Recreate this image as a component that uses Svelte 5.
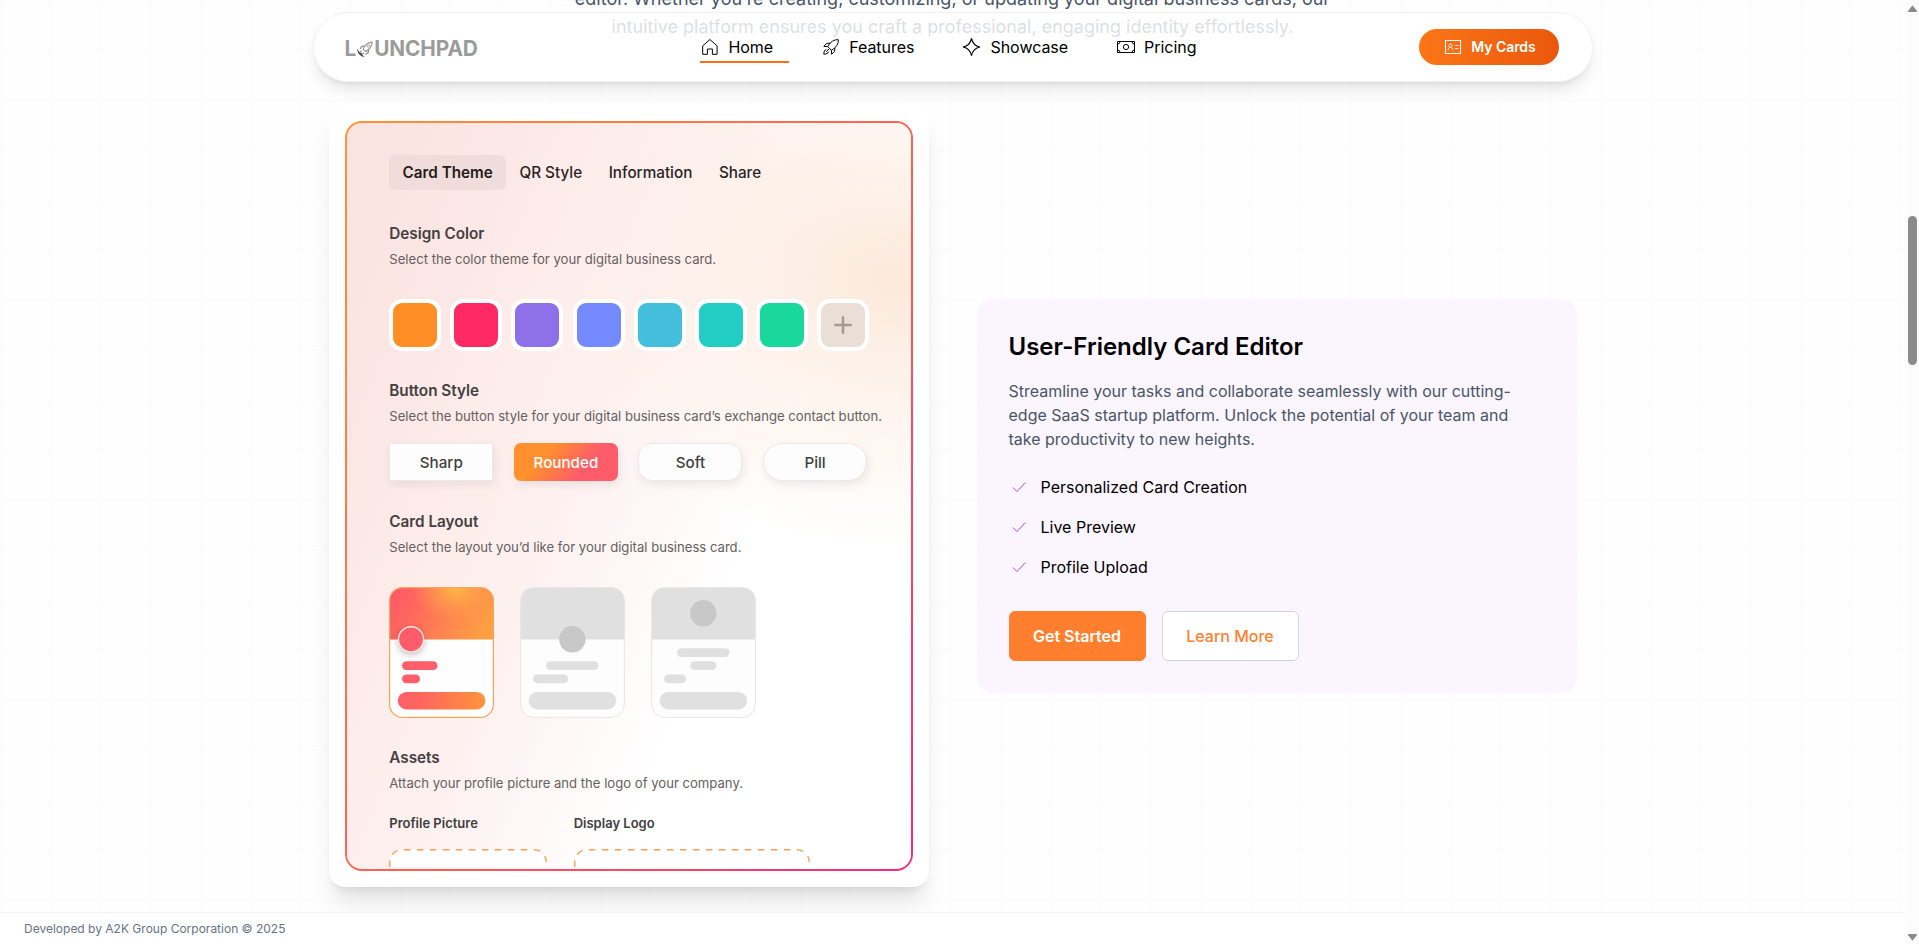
<script>
  const swatches = ['#ff8e27', '#ff2a64', '#8e70e8', '#758aff', '#44bfdb', '#22cec3', '#1ad89c'];
  const features = ['Personalized Card Creation', 'Live Preview', 'Profile Upload'];
  const tabs = ['Card Theme', 'QR Style', 'Information', 'Share'];
  const buttonStyles = [
    { label: 'Sharp', kind: 'sharp' },
    { label: 'Rounded', kind: 'rounded' },
    { label: 'Soft', kind: 'soft' },
    { label: 'Pill', kind: 'pill' }
  ];
</script>

<div class="page">
  <div class="view">
    <main>
      <p class="intro">
        editor. Whether you’re creating, customizing, or updating your digital business cards, our<br />
        intuitive platform ensures you craft a professional, engaging identity effortlessly.
      </p>

      <section class="showcase">
        <div class="frame">
          <div class="editor">
            <div class="tabs">
              {#each tabs as tab, i}
                <span class="tab" class:active={i === 0}>{tab}</span>
              {/each}
            </div>

            <h3 class="first">Design Color</h3>
            <p class="sub">Select the color theme for your digital business card.</p>
            <div class="swatches">
              {#each swatches as color}
                <span class="swatch" style="background-color: {color}"></span>
              {/each}
              <span class="swatch add">
                <svg width="18" height="18" viewBox="0 0 18 18"><path d="M9 1.3v15.4M1.3 9h15.4" /></svg>
              </span>
            </div>

            <h3>Button Style</h3>
            <p class="sub">Select the button style for your digital business card’s exchange contact button.</p>
            <div class="styles">
              {#each buttonStyles as b}
                <span class="style {b.kind}">{b.label}</span>
              {/each}
            </div>

            <h3>Card Layout</h3>
            <p class="sub">Select the layout you’d like for your digital business card.</p>
            <div class="layouts">
              <svg width="105" height="131" viewBox="0 0 105 131">
                <defs>
                  <linearGradient id="warm" x1="0" y1="0" x2="1" y2="0">
                    <stop offset="0" stop-color="#ff5e69" />
                    <stop offset=".25" stop-color="#ff6560" />
                    <stop offset="1" stop-color="#ff943c" />
                  </linearGradient>
                  <linearGradient id="head" x1="0" y1="0.2" x2="1" y2="0.5">
                    <stop offset="0" stop-color="#ff5a67" />
                    <stop offset=".25" stop-color="#ff6660" />
                    <stop offset="1" stop-color="#ff9f42" />
                  </linearGradient>
                  <radialGradient id="sun" gradientUnits="userSpaceOnUse" cx="66" cy="0" r="44" gradientTransform="matrix(1 0 0 .8 0 0)">
                    <stop offset="0" stop-color="#ffbc46" />
                    <stop offset="1" stop-color="#ffa042" stop-opacity="0" />
                  </radialGradient>
                  <clipPath id="round"><rect x=".5" y=".5" width="104" height="130" rx="13" /></clipPath>
                </defs>
                <g clip-path="url(#round)">
                  <rect width="105" height="131" fill="#fefefe" />
                  <rect width="105" height="52.5" fill="url(#head)" />
                  <rect width="105" height="52.5" fill="url(#sun)" />
                </g>
                <rect x=".6" y=".6" width="103.8" height="129.8" rx="13" fill="none" stroke="#f6a45c" stroke-width="1.2" />
                <circle class="lift" cx="22" cy="52.3" r="12.6" fill="#ff5c69" stroke="#f7e6e4" stroke-width="1.4" />
                <rect x="13" y="74.3" width="35.5" height="8.8" rx="4.4" fill="#ff5f6b" />
                <rect x="13" y="87.4" width="18" height="8.8" rx="4.4" fill="#ff5f6b" />
                <rect x="8.8" y="105" width="87.6" height="17.4" rx="8.7" fill="url(#warm)" />
              </svg>
              <svg width="105" height="131" viewBox="0 0 105 131">
                <g clip-path="url(#round)">
                  <rect width="105" height="131" fill="#fdfdfd" />
                  <rect width="105" height="52.5" fill="#e0e0e0" />
                </g>
                <rect x=".6" y=".6" width="103.8" height="129.8" rx="13" fill="none" stroke="#e6e6e6" />
                <circle cx="52.3" cy="52.3" r="13.2" fill="#c8c8c8" />
                <g fill="#e0e0e0">
                  <rect x="26" y="74.3" width="52.5" height="8.8" rx="4.4" />
                  <rect x="13" y="87.4" width="35.2" height="8.8" rx="4.4" />
                  <rect x="8.6" y="105" width="87.6" height="17.4" rx="8.7" />
                </g>
              </svg>
              <svg width="105" height="131" viewBox="0 0 105 131">
                <g clip-path="url(#round)">
                  <rect width="105" height="131" fill="#fdfdfd" />
                  <rect width="105" height="52.5" fill="#e0e0e0" />
                </g>
                <rect x=".6" y=".6" width="103.8" height="129.8" rx="13" fill="none" stroke="#e6e6e6" />
                <circle cx="52.3" cy="26.3" r="13.2" fill="#c8c8c8" />
                <g fill="#e0e0e0">
                  <rect x="26" y="61.2" width="52.5" height="8.8" rx="4.4" />
                  <rect x="39.2" y="74.3" width="26.2" height="8.8" rx="4.4" />
                  <rect x="13" y="87.4" width="22" height="8.8" rx="4.4" />
                  <rect x="8.6" y="105" width="87.6" height="17.4" rx="8.7" />
                </g>
              </svg>
            </div>

            <h3 class="assets">Assets</h3>
            <p class="sub">Attach your profile picture and the logo of your company.</p>
            <div class="uploads">
              <div class="upload">
                <h4>Profile Picture</h4>
                <svg width="158" height="18" viewBox="0 0 158 18">
                  <path d="M.8 18V12.8A12 12 0 0 1 12.8 .8H145.2A12 12 0 0 1 157.2 12.8V18" />
                </svg>
              </div>
              <div class="upload">
                <h4>Display Logo</h4>
                <svg width="237" height="18" viewBox="0 0 237 18">
                  <path d="M.8 18V12.8A12 12 0 0 1 12.8 .8H223.2A12 12 0 0 1 235.2 12.8V18" />
                </svg>
              </div>
            </div>
          </div>
        </div>

        <article class="info">
          <h2>User-Friendly Card Editor</h2>
          <p>
            Streamline your tasks and collaborate seamlessly with our cutting-edge SaaS startup platform. Unlock
            the potential of your team and take productivity to new heights.
          </p>
          <ul>
            {#each features as f}
              <li>
                <svg width="20" height="20" viewBox="0 0 20 20"><path d="M4 10.6l4 4 8.2-9" /></svg>
                {f}
              </li>
            {/each}
          </ul>
          <div class="actions">
            <button class="primary">Get Started</button>
            <button class="secondary">Learn More</button>
          </div>
        </article>
      </section>
    </main>

    <footer>Developed by A2K Group Corporation © 2025</footer>

    <header>
      <div class="logo">
        <span>L</span>
        <svg width="18" height="17" viewBox="0 0 17 17" fill="none">
          <path d="M.8 7.6C.4 11.8 3.4 15.8 8.6 16.1C6.6 14.8 5.6 13.6 5.3 12.2C3.4 11.8 1.8 10.2 .8 7.6Z" fill="#4b4b4b" />
          <path d="M15.6 1.1C11.6 1.3 8.4 4 6.6 8.2L9.1 10.6C13 8.7 15.5 5.2 15.6 1.1Z" stroke="#999" stroke-width="1.2" />
          <circle cx="11.9" cy="4.9" r="1.2" stroke="#a4a4a4" />
          <path d="M7.8 4.8L5.2 5.4L3.6 8M12.2 8.9L11.7 11.6L9 13.4M5 9.7L3.5 11.3M7.3 11.7L5.7 13.2" stroke="#909090" stroke-width="1.2" />
        </svg>
        <span>UNCHPAD</span>
      </div>

      <nav>
        <a class="current" href="#home">
          <svg viewBox="0 0 20 20"><path d="M2.7 8.9L9.9 2.5L17.1 8.9V17.3H12.4V12H7.4V17.3H2.7Z" /></svg>
          Home
        </a>
        <a href="#features">
          <svg viewBox="0 0 20 20">
            <path d="M17.3 2.7C13 2.4 9.4 4.8 6.8 9.6L10.4 13.2C15.2 10.6 17.6 7 17.3 2.7Z" />
            <path d="M9.3 6.1L5.6 6.4L2.8 9.4L6.8 9.6M13.9 10.7L13.6 14.4L10.6 17.2L10.4 13.2" />
            <path d="M5.3 12.3C3.6 13 2.9 14.6 2.8 17.2C5.4 17.1 7 16.4 7.7 14.7M5.3 14.7L8 12" />
          </svg>
          Features
        </a>
        <a href="#showcase">
          <svg viewBox="0 0 20 20"><path class="bold" d="M9.5 1.3C10.5 6.3 12.9 9 18 10C12.9 11 10.5 13.7 9.5 18.7C8.5 13.7 6.1 11 1 10C6.1 9 8.5 6.3 9.5 1.3Z" /></svg>
          Showcase
        </a>
        <a href="#pricing">
          <svg viewBox="0 0 20 20">
            <path d="M1.5 4.5H18.5V15.5H1.5ZM1.5 7A2.5 2.5 0 0 0 4 4.5M16 4.5A2.5 2.5 0 0 0 18.5 7M1.5 13A2.5 2.5 0 0 1 4 15.5M16 15.5A2.5 2.5 0 0 1 18.5 13" />
            <circle cx="10" cy="10" r="2.6" />
          </svg>
          Pricing
        </a>
      </nav>

      <button class="cards">
        <svg viewBox="0 0 20 20">
          <path class="edge" d="M2.5 3.5H17.5V16.5H2.5Z" />
          <circle cx="7.5" cy="8.6" r="1.7" />
          <path d="M4.9 13.2C5.2 11.2 6.2 10.4 7.5 10.4S9.8 11.2 10.1 13.2M11.8 8.5H15.5M11.8 11.5H15.5" />
        </svg>
        My Cards
      </button>
    </header>
  </div>

  <div class="scrollbar">
    <svg width="9" height="7" viewBox="0 0 9 7"><path d="M4.5 .2L8.8 5.8V7H.2V5.8Z" /></svg>
    <span class="thumb"></span>
    <svg class="down" width="9" height="7" viewBox="0 0 9 7"><path d="M4.5 6.8L8.8 1.2V0H.2V1.2Z" /></svg>
  </div>
</div>

<style>
  :global(body) {
    background: #fff;
  }
  .page {
    display: flex;
    height: 944px;
    overflow: hidden;
    font-family: Inter, 'Liberation Sans', sans-serif;
    font-size: 16px;
    line-height: 24px;
    color: #000;
  }
  .page * {
    box-sizing: border-box;
  }
  h2, h3, h4, p, ul {
    margin: 0;
    padding: 0;
  }
  button {
    font: inherit;
    cursor: pointer;
  }
  .view {
    position: relative;
    flex: 1;
    display: flex;
    flex-direction: column;
  }
  main {
    height: 912px;
    overflow: hidden;
    background-color: #fefefe;
    background-image:
      linear-gradient(to right, #fbfbfb 1px, transparent 1px),
      linear-gradient(to bottom, #fbfbfb 1px, transparent 1px);
    background-size: 50px 50px;
  }
  .intro {
    margin-top: -15.5px;
    height: 120.5px;
    font-size: 18px;
    line-height: 28.5px;
    color: #4a5565;
    text-align: center;
  }
  .showcase {
    width: 1248px;
    margin: 0 auto;
    display: grid;
    grid-template-columns: 1fr 1fr;
    gap: 48px;
    align-items: center;
  }
  .frame {
    padding: 16px;
    border-radius: 16px;
    background: #fff;
    box-shadow: 0 20px 25px -5px rgba(0, 0, 0, 0.1), 0 8px 10px -6px rgba(0, 0, 0, 0.1);
  }
  .editor {
    height: 750px;
    padding: 32px 0 0 42.8px;
    overflow: hidden;
    border: 2px solid transparent;
    border-radius: 17px;
    background:
      radial-gradient(ellipse 340px 270px at 97% 21%, #fce9da, rgba(253, 237, 225, 0.6) 45%, rgba(255, 244, 238, 0)) padding-box,
      linear-gradient(112deg, #fae3df 0%, #fbe6e4 14%, #fdecea 28%, #fdf2f1 44%, #fff 66%) padding-box,
      linear-gradient(#fff, #fff) padding-box,
      linear-gradient(125deg, #ff9331 0%, #fb6355 50%, #f22a7c 100%) border-box;
  }
  .tabs {
    display: flex;
    height: 35px;
  }
  .tab {
    padding: 0 13.3px;
    border-radius: 6.5px;
    font-size: 15.25px;
    font-weight: 500;
    line-height: 35px;
    color: #292524;
  }
  .tab.active {
    background: #f0dcda;
    font-weight: 600;
    color: #1f1c1b;
  }
  h3 {
    margin-top: 30px;
    font-size: 15.27px;
    font-weight: 600;
    line-height: 20px;
    color: #44403f;
  }
  h3.first {
    margin-top: 34px;
  }
  h3.assets {
    margin-top: 30px;
  }
  .sub {
    margin-top: 6px;
    font-size: 13.12px;
    line-height: 18px;
    color: #66605f;
    white-space: nowrap;
  }
  .swatches {
    display: flex;
    gap: 9.1px;
    margin-top: 31px;
  }
  .swatch {
    display: grid;
    place-items: center;
    width: 52px;
    height: 52px;
    border: 4px solid #fff;
    border-radius: 13px;
  }
  .add {
    background: #eadfd6;
  }
  .add path {
    stroke: #a39996;
    stroke-width: 2.5;
    stroke-linecap: round;
  }
  .styles {
    display: flex;
    gap: 20.6px;
    margin-top: 17.5px;
  }
  .style {
    width: 104px;
    height: 38px;
    border: 1px solid #ebe9e9;
    background: #fdfdfd;
    box-shadow: 2px 4px 8px rgba(80, 50, 50, 0.09);
    font-size: 15.2px;
    font-weight: 500;
    line-height: 38px;
    text-align: center;
    color: #404040;
  }
  .rounded {
    border: 0;
    border-radius: 7px;
    background: linear-gradient(130deg, #ff902e 30%, #ff5c69 68%);
    color: #fff;
    line-height: 40px;
  }
  .soft {
    border-radius: 14px;
  }
  .pill {
    border-radius: 19px;
  }
  .styles + h3 {
    margin-top: 31px;
  }
  .layouts {
    display: flex;
    gap: 26px;
    margin-top: 31px;
  }
  .lift {
    filter: drop-shadow(0 2px 3px rgba(0, 0, 0, 0.25));
  }
  .layouts svg,
  .upload svg {
    display: block;
  }
  .uploads {
    display: flex;
    gap: 26.4px;
    margin-top: 22px;
  }
  h4 {
    margin-bottom: 17px;
    font-size: 13px;
    font-weight: 600;
    line-height: 18px;
    color: #404040;
  }
  .upload path {
    fill: #fff;
    stroke: #f7a055;
    stroke-width: 1.4;
    stroke-dasharray: 6.5 6.5;
  }
  .info {
    padding: 32px;
    border-radius: 16px;
    background: #faf5ff;
  }
  h2 {
    font-size: 24px;
    font-weight: 600;
    line-height: 32px;
  }
  .info p {
    margin-top: 16px;
    color: #4a5565;
  }
  ul {
    display: flex;
    flex-direction: column;
    gap: 16px;
    margin-top: 24px;
    list-style: none;
  }
  li {
    display: flex;
    align-items: center;
    gap: 12px;
  }
  li path {
    fill: none;
    stroke: #ad46ff;
    stroke-width: 1;
  }
  .actions {
    display: flex;
    gap: 16px;
    margin-top: 32px;
  }
  .actions button {
    height: 50px;
    width: 137px;
    padding: 0;
    border: 1px solid #ff7f2e;
    border-radius: 6px;
    font-weight: 500;
  }
  .actions .primary {
    background: #ff7f2e;
    font-weight: 600;
    color: #fff;
  }
  .actions .secondary {
    border-color: #d1d5dc;
    background: #fff;
    color: #ff7f2e;
  }
  footer {
    position: relative;
    height: 32px;
    padding-left: 24px;
    border-top: 1px solid #f1f1f2;
    background: #fff;
    font-size: 12px;
    line-height: 32px;
    color: #6a7282;
  }
  header {
    position: absolute;
    top: 12px;
    left: 50%;
    width: 1280px;
    height: 70px;
    margin-left: -640px;
    padding: 0 32px;
    display: flex;
    align-items: center;
    justify-content: space-between;
    border: 1px solid #f1f1f1;
    border-radius: 35px;
    background: rgba(255, 255, 255, 0.81);
    box-shadow: 0 10px 15px -3px rgba(0, 0, 0, 0.1), 0 4px 6px -4px rgba(0, 0, 0, 0.1);
  }
  .logo {
    display: flex;
    align-items: center;
    width: 149px;
    padding-top: 4px;
    margin-left: -1px;
    font-size: 20.8px;
    font-weight: 700;
    color: #9b9b9b;
    letter-spacing: -0.1px;
  }
  nav {
    display: flex;
    gap: 32px;
  }
  nav a {
    display: flex;
    align-items: center;
    gap: 8px;
    height: 32px;
    padding-right: 16px;
    border-bottom: 2px solid transparent;
    padding-top: 2px;
    color: #000;
    text-decoration: none;
    letter-spacing: -0.03px;
  }
  nav .current {
    border-color: #ff6f16;
  }
  nav svg,
  .cards svg {
    width: 20px;
    height: 20px;
    fill: none;
    stroke: currentColor;
    stroke-width: 1;
  }
  nav .bold {
    stroke-width: 1.2;
  }
  .cards {
    display: flex;
    align-items: center;
    justify-content: center;
    gap: 8px;
    width: 140px;
    height: 36px;
    padding: 0;
    border: 0;
    border-radius: 18px;
    background: linear-gradient(to right, #fb7617, #ea570c);
    font-size: 14px;
    font-weight: 600;
    letter-spacing: -0.05px;
    color: #fff;
  }
  .cards svg {
    stroke-width: 0.8;
  }
  .cards .edge {
    stroke-width: 1.1;
  }
  .scrollbar {
    display: flex;
    flex-direction: column;
    align-items: center;
    width: 14px;
    padding: 5px 0 3px;
    background: #fcfcfc;
  }
  .scrollbar path {
    fill: #8b8b8b;
  }
  .thumb {
    width: 9px;
    height: 149px;
    margin-top: 204px;
    border-radius: 5px;
    background: #8b8b8b;
  }
  .down {
    margin-top: auto;
  }
</style>
